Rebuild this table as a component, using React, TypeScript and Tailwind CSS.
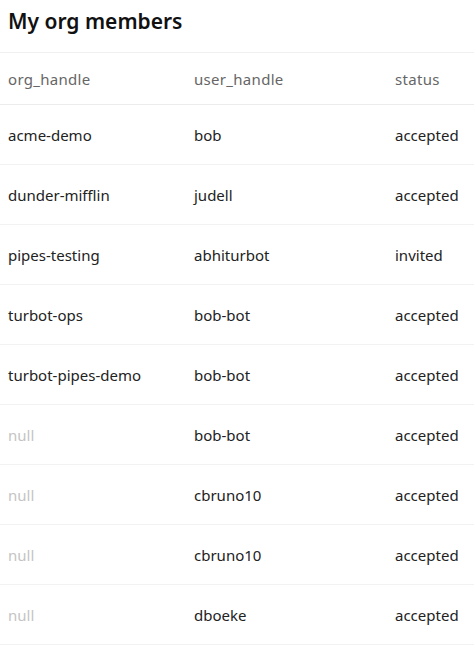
const rows: [string | null, string, string][] = [
  ["acme-demo", "bob", "accepted"],
  ["dunder-mifflin", "judell", "accepted"],
  ["pipes-testing", "abhiturbot", "invited"],
  ["turbot-ops", "bob-bot", "accepted"],
  ["turbot-pipes-demo", "bob-bot", "accepted"],
  [null, "bob-bot", "accepted"],
  [null, "cbruno10", "accepted"],
  [null, "cbruno10", "accepted"],
  [null, "dboeke", "accepted"],
];

const App = () => {
  return (
    <div className="bg-white w-[474px] h-[646px] overflow-hidden font-['Noto_Sans',sans-serif] text-[#222]">
      <h1 className="px-2 pt-[6px] h-[52px] text-[21px] font-semibold leading-[30px] text-[#111]">
        My org members
      </h1>
      <div className="border-t border-[#f0f0f0]">
        {/* header */}
        <div className="grid grid-cols-[186px_201px_1fr] h-[52px] pt-[2px] items-center border-b border-[#ececec] text-[15px] text-[#666] tracking-[0.3px]">
          <div className="pl-2">org_handle</div>
          <div className="pl-2">user_handle</div>
          <div className="pl-2">status</div>
        </div>
        {rows.map((r, i) => (
          <div
            key={i}
            className="grid grid-cols-[186px_201px_1fr] h-[60px] pt-[2px] items-center border-b border-[#f2f2f2] text-[15px]"
          >
            <div className={r[0] ? "pl-2" : "pl-2 text-[#c4c4c4]"}>{r[0] ?? "null"}</div>
            <div className="pl-2">{r[1]}</div>
            <div className="pl-2">{r[2]}</div>
          </div>
        ))}
      </div>
    </div>
  );
};

export default App;
